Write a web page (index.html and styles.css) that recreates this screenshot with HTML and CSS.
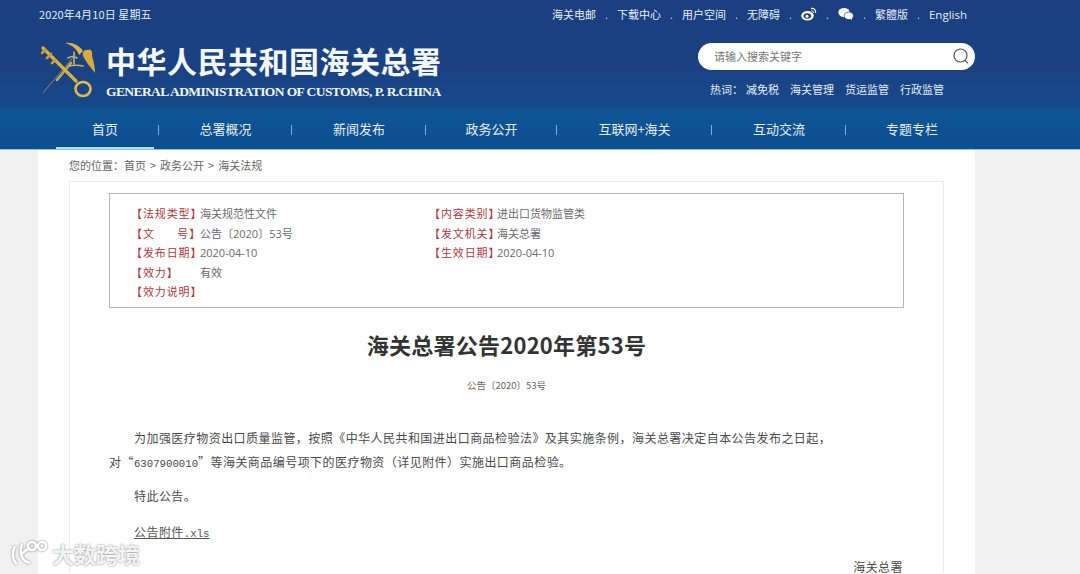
FILE: index.html
```html
<!DOCTYPE html>
<html lang="zh-CN">
<head>
  <meta charset="UTF-8" />
  <title>海关总署公告2020年第53号</title>
  <link rel="stylesheet" href="styles.css">
</head>
<body>
  <header class="header">
    <div class="topbar">
      <span class="date">2020年4月10日 星期五</span>
      <div class="toplinks">
        <a>海关电邮</a><i>.</i>
        <a>下载中心</a><i>.</i>
        <a>用户空间</a><i>.</i>
        <a>无障碍</a><i>.</i>
        <!-- weibo -->
        <svg class="social" width="16" height="14" viewBox="0 0 16 14">
          <ellipse cx="6.5" cy="8.8" rx="6.3" ry="4.8" fill="#fff"/>
          <ellipse cx="6.3" cy="9" rx="3.8" ry="2.7" fill="#1b3f7f"/>
          <circle cx="6" cy="9.2" r="1.5" fill="#fff"/>
          <path d="M10 1.4c3-.6 5.2 1.6 4.5 4.4" fill="none" stroke="#fff" stroke-width="1.2"/>
          <path d="M10.4 3.8c1.3-.2 2.2.7 2 2" fill="none" stroke="#fff" stroke-width="1"/>
        </svg><i>.</i>
        <!-- wechat -->
        <svg class="social" width="16" height="14" viewBox="0 0 16 14">
          <ellipse cx="6" cy="5.6" rx="5.6" ry="4.6" fill="#fff"/>
          <ellipse cx="10.8" cy="8.8" rx="4.6" ry="3.8" fill="#fff" stroke="#1b3f7f" stroke-width=".7"/>
          <path d="M12.5 11.5l1.4 1.9-.2-2.6z" fill="#fff"/>
        </svg><i>.</i>
        <a>繁體版</a><i>.</i>
        <a class="en">English</a>
      </div>
    </div>
    <div class="brand-row">
      <div class="brand">
        <svg class="emblem" width="62" height="58" viewBox="0 0 62 58">
          <g fill="none" stroke-linecap="round">
            <path d="M36 13L4 51" stroke="#8f8a6c" stroke-width="1"/>
            <path d="M32 21L18 38" stroke="#c9a650" stroke-width="2.6"/>
            <path d="M35 10v12M29 16c3-2 6-2 9 0M30 24c5-1 10-1 14 0" stroke="#cdb06a" stroke-width="1.6"/>
            <path d="M4 6L37 39" stroke="#dcae42" stroke-width="3.2"/>
            <path d="M3 11l3-3M8 16l4-4M13 21l3-3" stroke="#c99a35" stroke-width="2.6"/>
            <ellipse cx="44" cy="47" rx="7.5" ry="7" stroke="#e3b850" stroke-width="2.6"/>
          </g>
          <path d="M26 1C33 0 40 3 44 9L40 13C38 7 33 3 26 1z" fill="#e0b548"/>
          <path d="M44 14C43 10 45 8 48 8 52 6 54 10 53 14 55 20 56 26 56 31 52 26 47 20 44 14z" fill="#d9ab3e"/>
        </svg>
        <div class="brand-text">
          <div class="brand-cn">中华人民共和国海关总署</div>
          <div class="brand-en">GENERAL ADMINISTRATION OF CUSTOMS, P. R.CHINA</div>
        </div>
      </div>
      <div class="search-side">
        <div class="search">
          <span>请输入搜索关键字</span>
          <svg width="18" height="18" viewBox="0 0 18 18" fill="none" stroke="#4a4f57" stroke-width="1.2">
            <circle cx="8.5" cy="8.5" r="6.5"/>
            <path d="M13 13.4l3 2.8"/>
          </svg>
        </div>
        <div class="hotwords">
          <span>热词：</span><a>减免税</a><a>海关管理</a><a>货运监管</a><a>行政监管</a>
        </div>
      </div>
    </div>
    <nav class="nav">
      <a class="nav-item active home">首页</a>
      <a class="nav-item w133">总署概况</a>
      <a class="nav-item w134">新闻发布</a>
      <a class="nav-item w131">政务公开</a>
      <a class="nav-item w155">互联网+海关</a>
      <a class="nav-item w134">互动交流</a>
      <a class="nav-item w132 last">专题专栏</a>
    </nav>
  </header>

  <main class="page">
    <div class="crumbs">您的位置：首页<i>&gt;</i>政务公开<i>&gt;</i>海关法规</div>
    <div class="panel">
      <div class="info">
        <div class="info-row"><b>【法规类型】</b><span>海关规范性文件</span><b>【内容类别】</b><span>进出口货物监管类</span></div>
        <div class="info-row"><b>【文&nbsp;&nbsp;&nbsp;&nbsp;&nbsp;&nbsp;号】</b><span>公告〔2020〕53号</span><b>【发文机关】</b><span>海关总署</span></div>
        <div class="info-row"><b>【发布日期】</b><span>2020-04-10</span><b>【生效日期】</b><span>2020-04-10</span></div>
        <div class="info-row"><b>【效力】</b><span>有效</span></div>
        <div class="info-row"><b>【效力说明】</b></div>
      </div>
      <h1 class="title">海关总署公告2020年第53号</h1>
      <div class="doc-no">公告〔2020〕53号</div>
      <div class="article">
        <p class="line1">为加强医疗物资出口质量监管，按照《中华人民共和国进出口商品检验法》及其实施条例，海关总署决定自本公告发布之日起，</p>
        <p class="line2">对“<span class="num">6307900010</span>”等海关商品编号项下的医疗物资（详见附件）实施出口商品检验。</p>
        <p class="line3">特此公告。</p>
        <p class="line4"><a>公告附件<span class="num">.xls</span></a></p>
        <p class="sign">海关总署</p>
      </div>
    </div>
  </main>

  <div class="watermark">
    <svg width="40" height="30" viewBox="0 0 40 30" fill="none" stroke="#fff" stroke-width="2.6">
      <path d="M6 8C3 14 3 22 8 26M13 6c-3 8-1 17 8 19M13 16c2-3 4-4 6-5"/>
      <circle cx="23" cy="8" r="4"/>
      <circle cx="33" cy="8" r="4"/>
    </svg>
    <span>大数跨境</span>
  </div>
</body>
</html>
```
FILE: styles.css
```css
/* Page */
body {
  margin: 0;
  height: 574px;
  overflow: hidden;
  background-color: #f1f1f1;
  color: #555;
  font-family: 'Noto Sans CJK SC', 'Liberation Sans', sans-serif;
  position: relative;
}

/* Header */
.header {
  height: 150px;
  box-sizing: border-box;
  border-bottom: 1px solid #8cc4ec;
  background: linear-gradient(to bottom, #1b3f80 0, #1a4283 70px, #15498a 106px, #0f5596 112px, #0c4e8f 150px);
  color: #e6edf5;
  display: flex;
  flex-direction: column;
}

.topbar {
  height: 29px;
  padding: 0 113px 0 39px;
  display: flex;
  justify-content: space-between;
  align-items: center;
  font-size: 11px;
}

.date {
  letter-spacing: .1px;
}

.toplinks {
  display: flex;
  align-items: center;
}

.toplinks i {
  font-style: normal;
  width: 21px;
  text-align: center;
  opacity: .8;
}

.toplinks .en {
  font-family: 'Open Sans', sans-serif;
  font-size: 11.5px;
}

.social {
  display: block;
}

.brand-row {
  height: 80px;
  padding: 0 105px 0 39px;
  display: flex;
  justify-content: space-between;
}

.brand {
  display: flex;
  gap: 5px;
  padding-top: 13px;
}

.brand-text {
  color: #f4f7fb;
}

.brand-cn {
  font-size: 30px;
  line-height: 36px;
  font-weight: 700;
  letter-spacing: .5px;
  white-space: nowrap;
}

.brand-en {
  font-family: 'Liberation Serif', serif;
  font-weight: 700;
  font-size: 13.5px;
  line-height: 24px;
  margin-top: 2px;
  letter-spacing: -.58px;
  white-space: nowrap;
}

.search-side {
  width: 277px;
  padding-top: 14px;
}

.search {
  height: 27px;
  background: #fff;
  border-radius: 14px;
  display: flex;
  justify-content: space-between;
  align-items: center;
  padding: 0 5px 0 16px;
  font-size: 11px;
  color: #777;
}

.hotwords {
  margin: 6px 0 0 12px;
  font-size: 11px;
  line-height: 27px;
  white-space: nowrap;
  display: flex;
}

.hotwords a {
  margin-right: 11px;
}

.hotwords span {
  margin-right: 3px;
}

/* Main nav */
.nav {
  height: 41px;
  padding-left: 51px;
  display: flex;
  font-size: 13px;
}

.nav-item {
  position: relative;
  display: flex;
  justify-content: center;
  align-items: center;
  height: 40px;
  box-sizing: border-box;
}

.nav-item::after {
  content: "";
  position: absolute;
  right: 0;
  top: 17px;
  width: 1px;
  height: 10px;
  background: #6fb0e4;
}

.nav-item.last::after {
  display: none;
}

.home { width: 108px; }
.w131 { width: 131px; }
.w132 { width: 132px; }
.w133 { width: 133px; }
.w134 { width: 134px; }
.w155 { width: 155px; }

.nav-item.active::before {
  content: "";
  position: absolute;
  left: 5px;
  right: 5px;
  bottom: -1px;
  height: 2px;
  background: #b8dcf5;
}

/* Content */
.page {
  width: 937px;
  height: 424px;
  margin-left: 38px;
  box-sizing: border-box;
  padding: 0 31px;
  background: #fff;
  overflow: hidden;
}

.crumbs {
  height: 31px;
  line-height: 30px;
  font-size: 11px;
  color: #666;
  white-space: nowrap;
}

.crumbs i {
  font-style: normal;
  margin: 0 4px;
}

.panel {
  border: 1px solid #ececec;
  border-bottom: 0;
  padding: 11px 39px 0;
  height: 392px;
  box-sizing: border-box;
}

.info {
  border: 1px solid #b5b5b5;
  box-sizing: border-box;
  height: 115px;
  padding: 10px 0 0 21px;
  font-size: 11px;
  font-family: 'Open Sans', 'Noto Sans CJK SC', sans-serif;
  color: #6a6a6a;
}

.info-row {
  height: 19.6px;
  line-height: 19.6px;
  display: grid;
  grid-template-columns: 69px 229px 68px 1fr;
}

.info-row b {
  font-weight: 400;
  color: #b5353a;
  letter-spacing: .9px;
  white-space: nowrap;
}

.title {
  margin: 20px 0 0;
  height: 32px;
  line-height: 32px;
  font-size: 22px;
  font-weight: 700;
  text-align: center;
  color: #333;
  letter-spacing: .25px;
}

.doc-no {
  margin-top: 17px;
  line-height: 16px;
  font-size: 9.5px;
  color: #666;
  text-align: center;
}

/* Article body */
.article {
  margin-top: 33px;
  font-size: 12px;
  letter-spacing: .45px;
  color: #4a4a4a;
}

.article p {
  margin: 0;
  height: 24px;
  line-height: 24px;
  white-space: nowrap;
}

.line1,
.line3,
.line4 {
  text-indent: 25px;
}

.article .line2 { height: 34px; }
.article .line3 { height: 36px; }
.article .line4 { height: 40px; }

.num {
  font-family: 'Liberation Mono', monospace;
  font-size: 10.7px;
  letter-spacing: 0;
}

.article a {
  text-decoration: underline;
  color: #555;
}

.article .sign {
  text-align: right;
  height: 14px;
  line-height: 14px;
  padding-right: 1px;
}

/* Picture watermark */
.watermark {
  position: absolute;
  left: 9px;
  bottom: 6px;
  display: flex;
  align-items: center;
  gap: 3px;
  color: rgba(255, 255, 255, .92);
  font-size: 22px;
  font-weight: 700;
  text-shadow: 0 0 2px rgba(110, 110, 110, .95);
  line-height: 30px;
}

.watermark svg {
  filter: drop-shadow(0 0 1px rgba(110, 110, 110, .9));
}
```
